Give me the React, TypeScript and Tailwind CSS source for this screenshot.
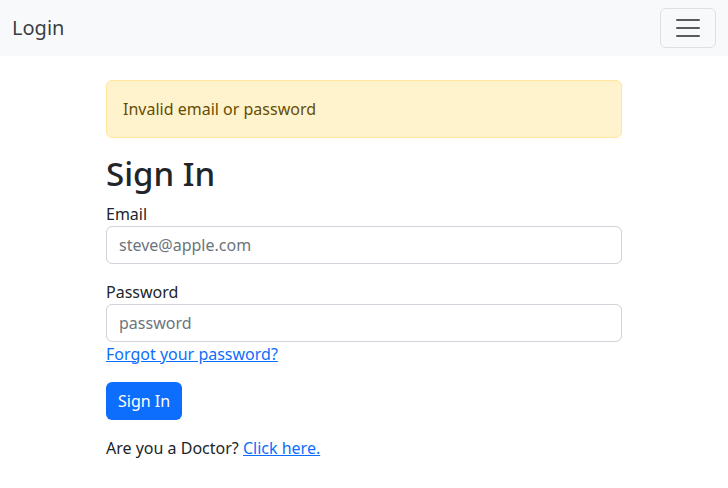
import React from 'react';

export default function App() {
  return (
    <div className="min-h-screen bg-white text-[#212529] text-base leading-6 font-['Noto_Sans',sans-serif]">
      {/* Navbar */}
      <nav className="bg-[#f8f9fa] py-2">
        <div className="flex items-center justify-between px-3">
          <a className="text-xl leading-[30px] py-[5px] text-[#212529]/90">Login</a>
          <button className="w-14 h-10 flex items-center justify-center border border-black/10 rounded-md">
            <svg width="30" height="30" viewBox="0 0 30 30">
              <path d="M4 7h22M4 15h22M4 23h22" stroke="rgba(33,37,41,0.75)" strokeWidth="2" strokeLinecap="round" />
            </svg>
          </button>
        </div>
      </nav>

      {/* Content */}
      <main className="w-[540px] mx-auto px-3 pt-6">
        <div className="bg-[#fff3cd] border border-[#ffe69c] rounded-md p-4 text-[#664d03] mb-4">
          Invalid email or password
        </div>
        <h1 className="text-[33px] leading-[1.2] font-medium mb-2">Sign In</h1>
        <form onSubmit={(e) => e.preventDefault()}>
          <div className="mb-4">
            <label className="block">Email</label>
            <input
              type="email"
              placeholder="steve@apple.com"
              className="block w-full h-[38px] px-3 border border-[#ced4da] rounded-md placeholder:text-[#6c757d] outline-none"
            />
          </div>
          <div>
            <label className="block">Password</label>
            <input
              type="password"
              placeholder="password"
              className="block w-full h-[38px] px-3 border border-[#ced4da] rounded-md placeholder:text-[#6c757d] outline-none"
            />
          </div>
          <a href="#" className="text-[#0d6efd] underline">Forgot your password?</a>
          <div className="mt-4">
            <button className="bg-[#0d6efd] text-white rounded-md px-3 h-[38px]">Sign In</button>
          </div>
        </form>
        <p className="mt-4">
          Are you a Doctor? <a href="#" className="text-[#0d6efd] underline">Click here.</a>
        </p>
      </main>
    </div>
  );
}
